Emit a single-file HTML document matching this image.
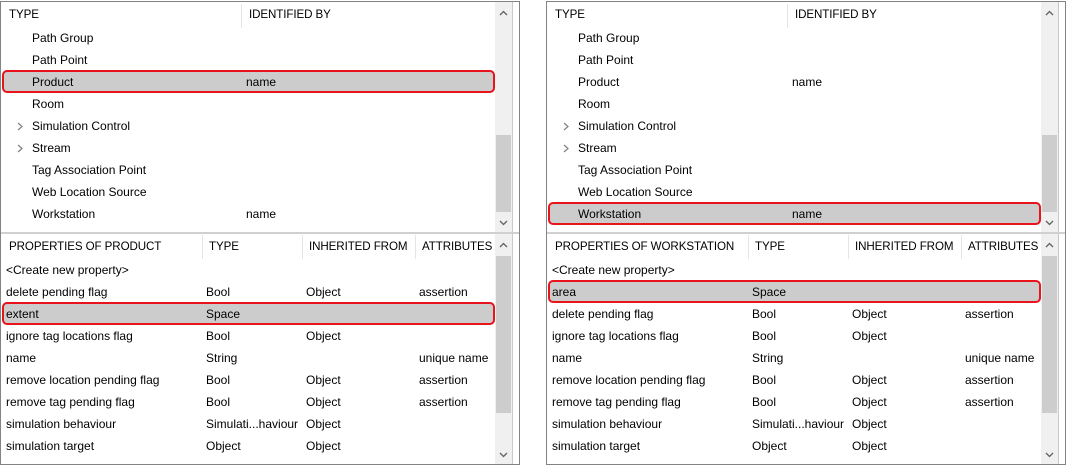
<!DOCTYPE html>
<html><head><meta charset="utf-8"><style>
*{margin:0;padding:0;box-sizing:border-box}
body{width:1078px;height:466px;background:#fff;font-family:"Liberation Sans",sans-serif;font-size:12px;color:#000;position:relative;overflow:hidden}
.p{position:absolute;top:1px;width:520px;height:464px;border:1px solid #838383;background:#fff}
.a{position:absolute;white-space:nowrap;line-height:14px}
.h{font-size:11.6px;letter-spacing:-0.1px}
.sb{position:absolute;left:494px;width:17px;background:#f0f0f0}
.th{position:absolute;left:1px;width:15px;background:#cdcdcd}
.sep{position:absolute;left:511px;width:1px;background:#c8c8c8}
.hl{position:absolute;left:1px;width:493px;height:23px;background:#cccccc;border:2px solid #e8141c;border-radius:5px}
.hd{position:absolute;top:0;width:1px;height:24px;background:#e5e5e5}
svg{position:absolute}
</style></head><body>

<!-- LEFT PANEL -->
<div class="p" style="left:0">
  <div class="hl" style="top:68px"></div>
  <div class="hl" style="top:300px"></div>
  <div class="a h" style="left:8px;top:6px">TYPE</div>
  <div class="hd" style="left:240px;top:2px"></div>
  <div class="a h" style="left:248px;top:6px">IDENTIFIED BY</div>
  <div class="a" style="left:31px;top:29px">Path Group</div>
  <div class="a" style="left:31px;top:51px">Path Point</div>
  <div class="a" style="left:31px;top:73px">Product</div><div class="a" style="left:245px;top:73px">name</div>
  <div class="a" style="left:31px;top:95px">Room</div>
  <div class="a" style="left:31px;top:117px">Simulation Control</div><svg style="left:16px;top:120px" width="6" height="9"><path d="M1 1L5 4.5L1 8" fill="none" stroke="#808080" stroke-width="1.2"/></svg>
  <div class="a" style="left:31px;top:139px">Stream</div><svg style="left:16px;top:142px" width="6" height="9"><path d="M1 1L5 4.5L1 8" fill="none" stroke="#808080" stroke-width="1.2"/></svg>
  <div class="a" style="left:31px;top:161px">Tag Association Point</div>
  <div class="a" style="left:31px;top:183px">Web Location Source</div>
  <div class="a" style="left:31px;top:205px">Workstation</div><div class="a" style="left:245px;top:205px">name</div>
  <div class="sb" style="top:0;height:230px"><div class="th" style="top:133px;height:77px"></div>
    <svg style="left:4px;top:8px" width="9" height="6"><path d="M1 5L4.5 1.5L8 5" fill="none" stroke="#606060" stroke-width="1.3"/></svg>
    <svg style="left:4px;top:218px" width="9" height="6"><path d="M1 1L4.5 4.5L8 1" fill="none" stroke="#606060" stroke-width="1.3"/></svg></div>
  <div class="sep" style="top:0;height:230px"></div>
  <div style="position:absolute;left:0;top:230px;width:518px;height:2px;background:#d0d0d0"></div>
  <div class="a h" style="left:8px;top:238px">PROPERTIES OF PRODUCT</div>
  <div class="hd" style="left:201px;top:233px"></div><div class="a h" style="left:208px;top:238px">TYPE</div>
  <div class="hd" style="left:301px;top:233px"></div><div class="a h" style="left:308px;top:238px">INHERITED FROM</div>
  <div class="hd" style="left:414px;top:233px"></div><div class="a h" style="left:421px;top:238px">ATTRIBUTES</div>
  <div class="a" style="left:5px;top:261px">&lt;Create new property&gt;</div>
  <div class="a" style="left:5px;top:283px">delete pending flag</div><div class="a" style="left:205px;top:283px">Bool</div><div class="a" style="left:305px;top:283px">Object</div><div class="a" style="left:418px;top:283px">assertion</div>
  <div class="a" style="left:5px;top:305px">extent</div><div class="a" style="left:205px;top:305px">Space</div>
  <div class="a" style="left:5px;top:327px">ignore tag locations flag</div><div class="a" style="left:205px;top:327px">Bool</div><div class="a" style="left:305px;top:327px">Object</div>
  <div class="a" style="left:5px;top:349px">name</div><div class="a" style="left:205px;top:349px">String</div><div class="a" style="left:418px;top:349px">unique name</div>
  <div class="a" style="left:5px;top:371px">remove location pending flag</div><div class="a" style="left:205px;top:371px">Bool</div><div class="a" style="left:305px;top:371px">Object</div><div class="a" style="left:418px;top:371px">assertion</div>
  <div class="a" style="left:5px;top:393px">remove tag pending flag</div><div class="a" style="left:205px;top:393px">Bool</div><div class="a" style="left:305px;top:393px">Object</div><div class="a" style="left:418px;top:393px">assertion</div>
  <div class="a" style="left:5px;top:415px">simulation behaviour</div><div class="a" style="left:205px;top:415px">Simulati...haviour</div><div class="a" style="left:305px;top:415px">Object</div>
  <div class="a" style="left:5px;top:437px">simulation target</div><div class="a" style="left:205px;top:437px">Object</div><div class="a" style="left:305px;top:437px">Object</div>
  <div class="sb" style="top:232px;height:230px"><div class="th" style="top:22px;height:157px"></div>
    <svg style="left:4px;top:8px" width="9" height="6"><path d="M1 5L4.5 1.5L8 5" fill="none" stroke="#606060" stroke-width="1.3"/></svg>
    <svg style="left:4px;top:218px" width="9" height="6"><path d="M1 1L4.5 4.5L8 1" fill="none" stroke="#606060" stroke-width="1.3"/></svg></div>
  <div class="sep" style="top:232px;height:230px"></div>
</div>

<!-- RIGHT PANEL -->
<div class="p" style="left:546px">
  <div class="hl" style="top:200px"></div>
  <div class="hl" style="top:278px"></div>
  <div class="a h" style="left:8px;top:6px">TYPE</div>
  <div class="hd" style="left:240px;top:2px"></div>
  <div class="a h" style="left:248px;top:6px">IDENTIFIED BY</div>
  <div class="a" style="left:31px;top:29px">Path Group</div>
  <div class="a" style="left:31px;top:51px">Path Point</div>
  <div class="a" style="left:31px;top:73px">Product</div><div class="a" style="left:245px;top:73px">name</div>
  <div class="a" style="left:31px;top:95px">Room</div>
  <div class="a" style="left:31px;top:117px">Simulation Control</div><svg style="left:16px;top:120px" width="6" height="9"><path d="M1 1L5 4.5L1 8" fill="none" stroke="#808080" stroke-width="1.2"/></svg>
  <div class="a" style="left:31px;top:139px">Stream</div><svg style="left:16px;top:142px" width="6" height="9"><path d="M1 1L5 4.5L1 8" fill="none" stroke="#808080" stroke-width="1.2"/></svg>
  <div class="a" style="left:31px;top:161px">Tag Association Point</div>
  <div class="a" style="left:31px;top:183px">Web Location Source</div>
  <div class="a" style="left:31px;top:205px">Workstation</div><div class="a" style="left:245px;top:205px">name</div>
  <div class="sb" style="top:0;height:230px"><div class="th" style="top:133px;height:77px"></div>
    <svg style="left:4px;top:8px" width="9" height="6"><path d="M1 5L4.5 1.5L8 5" fill="none" stroke="#606060" stroke-width="1.3"/></svg>
    <svg style="left:4px;top:218px" width="9" height="6"><path d="M1 1L4.5 4.5L8 1" fill="none" stroke="#606060" stroke-width="1.3"/></svg></div>
  <div class="sep" style="top:0;height:230px"></div>
  <div style="position:absolute;left:0;top:230px;width:518px;height:2px;background:#d0d0d0"></div>
  <div class="a h" style="left:8px;top:238px">PROPERTIES OF WORKSTATION</div>
  <div class="hd" style="left:201px;top:233px"></div><div class="a h" style="left:208px;top:238px">TYPE</div>
  <div class="hd" style="left:301px;top:233px"></div><div class="a h" style="left:308px;top:238px">INHERITED FROM</div>
  <div class="hd" style="left:414px;top:233px"></div><div class="a h" style="left:421px;top:238px">ATTRIBUTES</div>
  <div class="a" style="left:5px;top:261px">&lt;Create new property&gt;</div>
  <div class="a" style="left:5px;top:283px">area</div><div class="a" style="left:205px;top:283px">Space</div>
  <div class="a" style="left:5px;top:305px">delete pending flag</div><div class="a" style="left:205px;top:305px">Bool</div><div class="a" style="left:305px;top:305px">Object</div><div class="a" style="left:418px;top:305px">assertion</div>
  <div class="a" style="left:5px;top:327px">ignore tag locations flag</div><div class="a" style="left:205px;top:327px">Bool</div><div class="a" style="left:305px;top:327px">Object</div>
  <div class="a" style="left:5px;top:349px">name</div><div class="a" style="left:205px;top:349px">String</div><div class="a" style="left:418px;top:349px">unique name</div>
  <div class="a" style="left:5px;top:371px">remove location pending flag</div><div class="a" style="left:205px;top:371px">Bool</div><div class="a" style="left:305px;top:371px">Object</div><div class="a" style="left:418px;top:371px">assertion</div>
  <div class="a" style="left:5px;top:393px">remove tag pending flag</div><div class="a" style="left:205px;top:393px">Bool</div><div class="a" style="left:305px;top:393px">Object</div><div class="a" style="left:418px;top:393px">assertion</div>
  <div class="a" style="left:5px;top:415px">simulation behaviour</div><div class="a" style="left:205px;top:415px">Simulati...haviour</div><div class="a" style="left:305px;top:415px">Object</div>
  <div class="a" style="left:5px;top:437px">simulation target</div><div class="a" style="left:205px;top:437px">Object</div><div class="a" style="left:305px;top:437px">Object</div>
  <div class="sb" style="top:232px;height:230px"><div class="th" style="top:22px;height:157px"></div>
    <svg style="left:4px;top:8px" width="9" height="6"><path d="M1 5L4.5 1.5L8 5" fill="none" stroke="#606060" stroke-width="1.3"/></svg>
    <svg style="left:4px;top:218px" width="9" height="6"><path d="M1 1L4.5 4.5L8 1" fill="none" stroke="#606060" stroke-width="1.3"/></svg></div>
  <div class="sep" style="top:232px;height:230px"></div>
</div>
</body></html>
